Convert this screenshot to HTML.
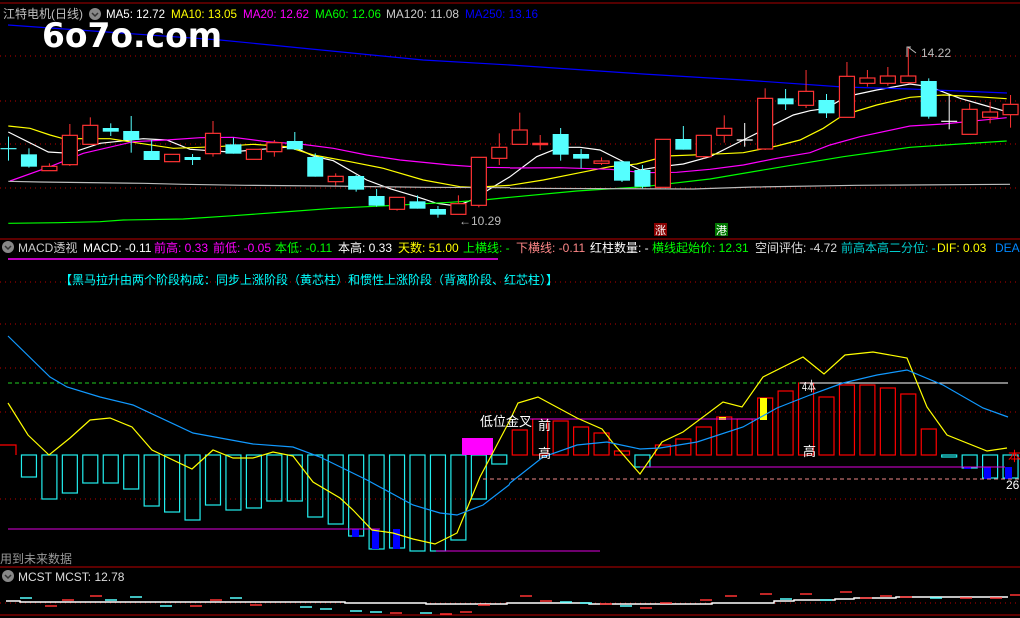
<!DOCTYPE html>
<html><head><meta charset="utf-8"><style>
html,body{margin:0;padding:0;background:#000;width:1020px;height:618px;overflow:hidden}
svg{display:block}
text{font-family:"Liberation Sans","Noto Sans CJK SC",sans-serif}
</style></head><body>
<svg id="s" width="1020" height="618" viewBox="0 0 1020 618" xmlns="http://www.w3.org/2000/svg">
<rect width="1020" height="618" fill="#000"/>
<line x1="0" y1="3" x2="1020" y2="3" stroke="#a00" stroke-width="1"/>
<g stroke="#b00" stroke-dasharray="1,4" stroke-width="1">
<line x1="0" y1="56" x2="1020" y2="56"/><line x1="0" y1="101" x2="1020" y2="101"/>
<line x1="0" y1="144" x2="1020" y2="144"/><line x1="0" y1="188" x2="1020" y2="188"/>
<line x1="0" y1="282" x2="1020" y2="282"/><line x1="0" y1="324" x2="1020" y2="324"/>
<line x1="0" y1="368" x2="1020" y2="368"/><line x1="0" y1="412" x2="1020" y2="412"/>
<line x1="0" y1="499" x2="1020" y2="499"/><line x1="0" y1="603" x2="1020" y2="603"/>
</g>
<line x1="0" y1="239" x2="1020" y2="239" stroke="#b00"/>
<line x1="0" y1="567" x2="1020" y2="567" stroke="#b00"/>
<line x1="0" y1="615" x2="1020" y2="615" stroke="#b00"/>
<g id="lines" fill="none" stroke-width="1.2"></g>
<g id="cand"></g>
<g id="macd"></g>
<text x="42" y="47" fill="#fff" font-size="34" font-weight="bold" textLength="180" lengthAdjust="spacingAndGlyphs" style="font-family:'DejaVu Sans',sans-serif">6o7o.com</text>
<g font-size="12">
<text x="3" y="18" fill="#c0c0c0" textLength="80" lengthAdjust="spacingAndGlyphs">江特电机(日线)</text>
<circle cx="95" cy="14" r="6" fill="#888"/><path d="M92 13l3 3 3-3" stroke="#333" fill="none" stroke-width="1.5"/>
<text x="106" y="18" fill="#fff" textLength="59" lengthAdjust="spacingAndGlyphs">MA5: 12.72</text>
<text x="171" y="18" fill="#ff0" textLength="66" lengthAdjust="spacingAndGlyphs">MA10: 13.05</text>
<text x="243" y="18" fill="#f0f" textLength="66" lengthAdjust="spacingAndGlyphs">MA20: 12.62</text>
<text x="315" y="18" fill="#0f0" textLength="66" lengthAdjust="spacingAndGlyphs">MA60: 12.06</text>
<text x="386" y="18" fill="#ccc" textLength="73" lengthAdjust="spacingAndGlyphs">MA120: 11.08</text>
<text x="465" y="18" fill="#00f" textLength="73" lengthAdjust="spacingAndGlyphs">MA250: 13.16</text>
</g>
<text x="921" y="57" fill="#bbb" font-size="12">14.22</text>
<path d="M907 57v-10h4M908 47l8 6" stroke="#bbb" fill="none"/>
<text x="459" y="225" fill="#bbb" font-size="12">←10.29</text>
<rect x="654" y="223" width="13" height="13" fill="#800"/><text x="655" y="234" fill="#fff" font-size="11">涨</text>
<rect x="715" y="223" width="13" height="13" fill="#070"/><text x="716" y="234" fill="#fff" font-size="11">港</text>
<g font-size="12">
<circle cx="8" cy="247" r="6" fill="#888"/><path d="M5 246l3 3 3-3" stroke="#333" fill="none" stroke-width="1.5"/>
<text x="18" y="252" fill="#ccc">MACD透视</text>
<text x="83" y="252" fill="#fff">MACD: -0.11</text>
<text x="154" y="252" fill="#f0f">前高: 0.33</text>
<text x="213" y="252" fill="#f0f">前低: -0.05</text>
<text x="275" y="252" fill="#0f0">本低: -0.11</text>
<text x="338" y="252" fill="#fff">本高: 0.33</text>
<text x="398" y="252" fill="#ff0">天数: 51.00</text>
<text x="463" y="252" fill="#0f0">上横线: -</text>
<text x="516" y="252" fill="#f88">下横线: -0.11</text>
<text x="590" y="252" fill="#fff">红柱数量: -</text>
<text x="652" y="252" fill="#0f0">横线起始价: 12.31</text>
<text x="755" y="252" fill="#ddd">空间评估: -4.72</text>
<text x="841" y="252" fill="#0cc">前高本高二分位: -</text>
<text x="937" y="252" fill="#ff0">DIF: 0.03</text>
<text x="995" y="252" fill="#08f">DEA</text>
</g>
<line x1="8" y1="259" x2="498" y2="259" stroke="#f0f" stroke-width="1.5"/>
<text x="60" y="284" fill="#0ff" font-size="12">【黑马拉升由两个阶段构成：同步上涨阶段（黄芯柱）和惯性上涨阶段（背离阶段、红芯柱）】</text>
<line x1="8" y1="383" x2="800" y2="383" stroke="#2c2" stroke-dasharray="4,3"/>
<line x1="800" y1="383" x2="1008" y2="383" stroke="#fff"/>
<line x1="8" y1="529" x2="380" y2="529" stroke="#d0d" />
<line x1="436" y1="551" x2="600" y2="551" stroke="#d0d"/>
<line x1="530" y1="419" x2="757" y2="419" stroke="#d0d"/>
<line x1="640" y1="467" x2="1005" y2="467" stroke="#d0d"/>
<line x1="483" y1="479" x2="1020" y2="479" stroke="#e88" stroke-dasharray="4,3"/>
<g id="ml" fill="none" stroke-width="1.2"></g>
<g font-size="13" fill="#fff">
<text x="480" y="426">低位金叉</text>
<text x="538" y="430">前</text>
<text x="538" y="458">高</text>
<text x="803" y="456">高</text>
<text x="802" y="391" textLength="14" lengthAdjust="spacingAndGlyphs">4本</text>
<text x="1006" y="489" font-size="12">26</text>
<text x="1008" y="461" fill="#f00">本</text>
</g>
<text x="0" y="563" fill="#999" font-size="12">用到未来数据</text>
<g font-size="12">
<circle cx="8" cy="576" r="6" fill="#888"/><path d="M5 575l3 3 3-3" stroke="#333" fill="none" stroke-width="1.5"/>
<text x="18" y="581" fill="#ddd">MCST MCST: 12.78</text>
</g>
<g id="mc"></g>
</svg>
<script>
var NS="http://www.w3.org/2000/svg";
function el(p,t,a){var e=document.createElementNS(NS,t);for(var k in a)e.setAttribute(k,a[k]);document.getElementById(p).appendChild(e);return e;}
function pl(p,pts,c,ox,oy,sx,sy){var s=pts.map(function(q){return (ox+q[0]/sx).toFixed(1)+","+(oy+q[1]/sy).toFixed(1)}).join(" ");el(p,"polyline",{points:s,stroke:c});}
var L=[
["#fff",[[25,276],[145,336],[210,340],[300,310],[430,296],[500,300],[570,328],[690,336],[820,325],[880,320],[940,348],[1000,362],[1100,420],[1170,446],[1250,470],[1310,490],[1370,498],[1420,478],[1480,440],[1530,410]],[[0,410],[80,350],[150,322],[210,322],[270,330],[330,360],[390,390],[450,380],[520,372],[600,350],[700,300],[780,260],[850,225],[900,212],[950,205],[1000,175],[1030,165],[1100,150],[1200,132],[1260,140],[1310,160],[1350,175],[1420,195],[1490,215]]],
["#ff0",[[25,258],[90,265],[150,285],[190,296],[330,296],[420,310],[520,325],[650,320],[760,313],[860,320],[940,345],[1050,365],[1150,385],[1270,420],[1380,440],[1420,442],[1530,436]],[[0,436],[100,420],[200,400],[300,380],[380,372],[470,348],[600,343],[700,338],[800,318],[870,300],[940,265],[1000,225],[1100,195],[1200,172],[1300,165],[1400,170],[1490,176]]],
["#f0f",[[30,423],[150,380],[250,340],[400,305],[500,300],[600,293],[700,292],[800,305],[900,312],[1000,325],[1100,345],[1200,360],[1350,375],[1450,382],[1530,383]],[[0,384],[150,383],[300,388],[400,398],[500,397],[600,388],[700,375],[800,355],[900,338],[960,315],[1050,290],[1200,258],[1300,252],[1400,242],[1490,233]]],
["#0f0",[[25,550],[175,548],[300,545],[370,540],[550,537],[700,527],[850,516],[1000,505],[1100,500],[1200,495],[1350,487],[1450,480],[1530,472]],[[0,472],[200,453],[400,440],[600,417],[800,383],[1000,350],[1200,322],[1350,312],[1490,303]]],
["#bbb",[[25,424],[120,426],[430,430],[550,433],[735,436],[975,438],[1280,442],[1530,443]],[[0,445],[550,447],[730,441],[1040,436],[1500,433]]]
];
L.forEach(function(l){pl("lines",l[1],l[0],0,40,3,3);pl("lines",l[2],l[0],510,40,3,3);});
el("lines","polyline",{points:"8,25 220,40 423,60 510,65 643,74 743,80 843,87 910,89 1007,93",stroke:"#00f"});
var C=[["cx",326,326,290,362],["c",343,380,325,383],["r",379,392,370,392],["r",286,374,252,378],["r",256,313,232,313],["c",264,275,250,288],["c",273,300,228,338],["c",333,360,300,360],["r",343,365,343,365],["c",351,360,342,375],["r",280,341,243,350],["c",313,341,293,341],["r",328,358,328,358],["r",308,335,300,350],["c",303,328,276,330],["c",351,410,340,410],["r",409,425,400,437],["c",408,449,405,455],["c",468,497,447,500],["r",472,508,472,512],["c",484,506,466,506],["c",507,524,498,533],["r",491,523,466,523],["r",352,496,352,502],["r",322,355,280,375],
["r",270,313,218,313],["rx",312,312,285,330],["c",282,344,264,362],["c",342,356,327,385],["r",363,370,352,375],["c",364,422,364,426],["c",390,440,375,445],["r",298,442,298,442],["c",297,329,258,329],["r",286,350,286,355],["r",265,286,226,308],["wx",300,300,249,320],["r",175,327,145,330],["c",175,193,147,210],["r",154,196,90,204],["c",180,220,162,234],["r",109,232,66,232],["r",114,130,90,140],["r",108,130,81,137],["r",108,128,20,130],["c",123,230,115,236],["wx",244,244,165,268],["r",208,283,190,283],["r",216,232,186,250],["r",193,224,165,263]];
C.forEach(function(c,i){var x=0.5+20.45*i,cx=x+8,t=c[0];var col=t[0]=="r"?"#f33":(t[0]=="c"?"#5ff":"#fff");
var y=function(v){return 40+v/3};
if(t.length>1){el("cand","line",{x1:cx,y1:y(c[3]),x2:cx,y2:y(c[4]),stroke:col});el("cand","line",{x1:x,y1:y(c[1]),x2:x+16,y2:y(c[1]),stroke:col,"stroke-width":t=="rx"?2.5:1.2});return;}
el("cand","line",{x1:cx,y1:y(c[3]),x2:cx,y2:y(c[4]),stroke:col});
if(t=="r")el("cand","rect",{x:x+0.5,y:y(c[1]),width:15,height:Math.max(1,y(c[2])-y(c[1])),fill:"#000",stroke:col,"stroke-width":1.2});
else el("cand","rect",{x:x,y:y(c[1]),width:16,height:Math.max(1,y(c[2])-y(c[1])),fill:col});
});
var B=455;
var neg=[22,44,38,28,28,34,51,57,65,50,55,53,46,46,62,69,81,94,93,96,96,85,44,9];
el("macd","path",{d:"M0 445H16V455",stroke:"#f00",fill:"none","stroke-width":1.2});
neg.forEach(function(d,k){var i=k+1,x=0.5+20.45*i;el("macd","rect",{x:x+0.5,y:B,width:15,height:d,fill:"none",stroke:"#2ee","stroke-width":1.2});});
el("macd","rect",{x:462,y:438,width:31,height:17,fill:"#f0f"});
var R=[430,419,421,427,433,451,-467,445,439,427,417,419,398,391,383,397,385,385,388,394,429,-457,-468,-478,-478];
R.forEach(function(t,k){var i=k+25,x=0.5+20.45*i;if(t>0)el("macd","rect",{x:x+0.5,y:t,width:15,height:B-t,fill:"none",stroke:"#f00","stroke-width":1.2});else{t=-t;el("macd","rect",{x:x+0.5,y:B,width:15,height:t-B,fill:"none",stroke:"#2ee","stroke-width":1.2});}});
[[352,529,7,8],[372,529,7,20],[393,529,7,20],[964,467,7,2],[984,467,7,12],[1005,467,7,12]].forEach(function(b){el("macd","rect",{x:b[0],y:b[1],width:b[2],height:b[3],fill:"#00f"});});
el("macd","rect",{x:760,y:398,width:7,height:22,fill:"#ff0"});
el("macd","rect",{x:719,y:417,width:7,height:3,fill:"#ff0"});
el("ml","polyline",{stroke:"#ff0",points:"8,403 28,435 49,455 70,438 90,420 110,418 132,427 152,450 192,469 213,450 233,458 253,458 273,452 293,456 313,482 340,498 353,510 372,530 393,533 413,539 435,544 457,533 480,477 509,422 518,403 538,397 577,418 602,429 613,443 640,474 662,442 683,432 723,402 742,407 763,377 803,357 824,374 845,355 873,352 907,358 927,407 947,435 987,451 1007,448"});
el("ml","polyline",{stroke:"#19f",points:"8,336 50,377 67,387 100,397 133,405 193,433 253,444 293,447 320,457 367,480 413,505 440,513 457,515 483,505 509,485 510,483 543,457 577,445 607,442 640,449 660,448 697,442 743,427 777,408 810,395 843,383 877,375 907,370 943,385 983,408 1008,417"});
el("mc","polyline",{fill:"none",stroke:"#fff","stroke-width":1.5,points:"6,601 20,601 20,602 345,602 345,603 426,603 426,604 507,604 507,603 589,603 589,604 712,604 712,603 774,603 774,601 794,601 794,600 835,600 835,599 854,599 854,598 896,598 896,597 1008,597"});
var D=[[20,598,"#5ff"],[45,606,"#f33"],[62,600,"#f33"],[90,596,"#f33"],[105,600,"#5ff"],[130,597,"#5ff"],[160,606,"#5ff"],[190,606,"#f33"],[210,600,"#f33"],[230,598,"#5ff"],[250,605,"#f33"],[300,607,"#5ff"],[320,609,"#5ff"],[350,611,"#5ff"],[370,612,"#5ff"],[390,613,"#f33"],[420,613,"#5ff"],[440,614,"#f33"],[460,612,"#f33"],[478,605,"#f33"],[520,596,"#f33"],[540,601,"#f33"],[560,602,"#5ff"],[580,603,"#5ff"],[600,604,"#f33"],[620,606,"#5ff"],[640,608,"#f33"],[660,603,"#f33"],[700,600,"#f33"],[725,596,"#f33"],[760,594,"#f33"],[780,599,"#5ff"],[800,594,"#f33"],[820,600,"#5ff"],[840,592,"#f33"],[860,598,"#f33"],[880,596,"#f33"],[900,597,"#f33"],[930,598,"#5ff"],[960,598,"#f33"],[990,598,"#f33"],[1010,595,"#f33"]];
D.forEach(function(d){el("mc","line",{x1:d[0],y1:d[1],x2:d[0]+12,y2:d[1],stroke:d[2],"stroke-width":1.5});});
</script>
</body></html>
